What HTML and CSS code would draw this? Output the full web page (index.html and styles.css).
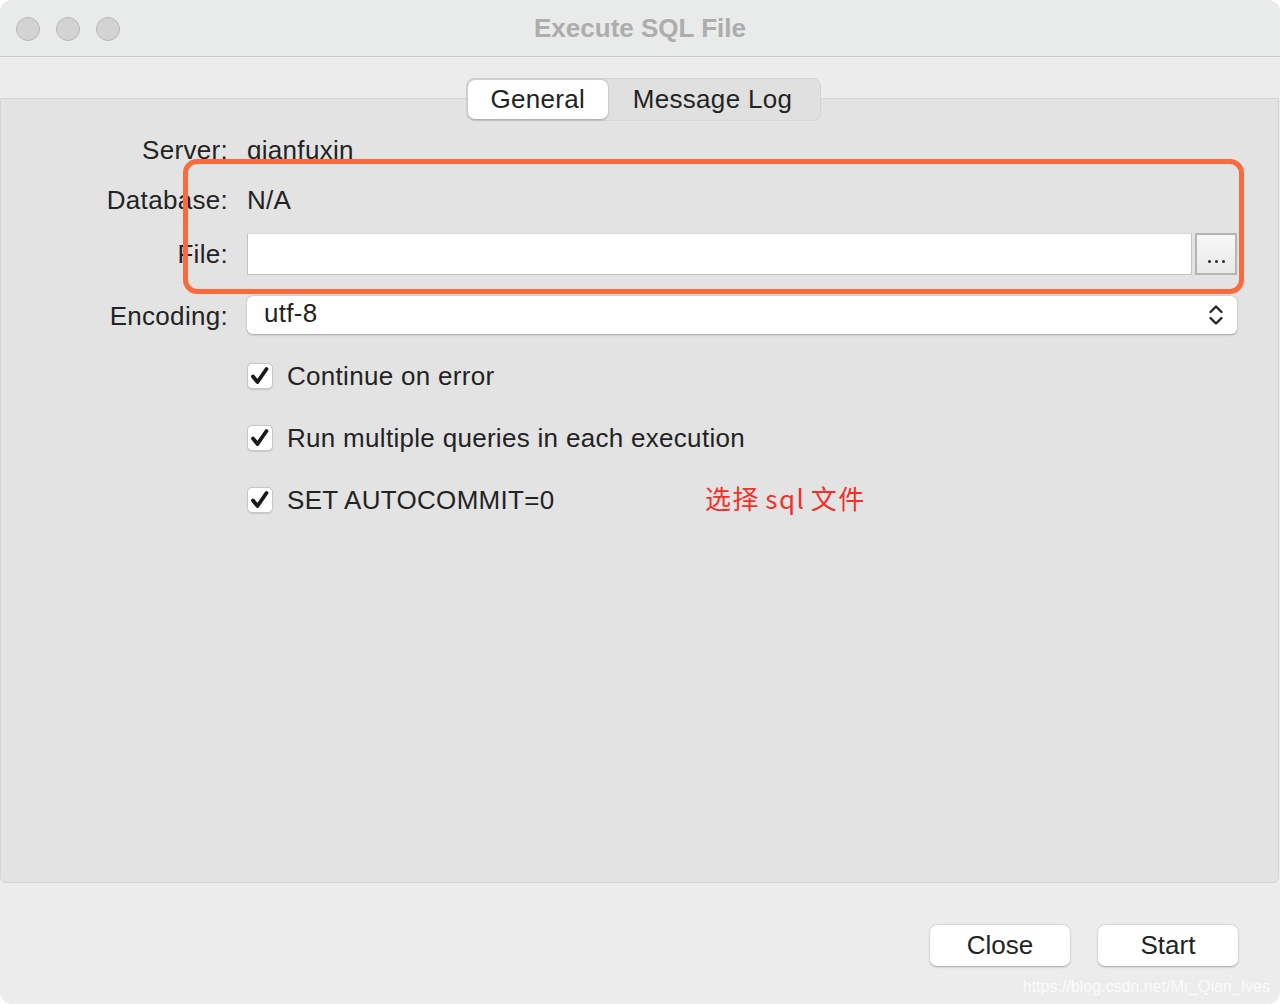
FILE: index.html
```html
<!DOCTYPE html>
<html>
<head>
<meta charset="utf-8">
<link rel="stylesheet" href="styles.css">
</head>
<body>
<div class="window">
  <div class="titlebar">
    <div class="lights">
      <span class="light"></span><span class="light"></span><span class="light"></span>
    </div>
    <div class="title">Execute SQL File</div>
    <div></div>
  </div>
  <div class="main">
    <div class="tabs">
      <div class="segmented">
        <div class="seg active">General</div>
        <div class="seg">Message Log</div>
      </div>
    </div>
    <div class="panel">
      <div class="row r-server"><div class="label">Server:</div><div class="value">qianfuxin</div></div>
      <div class="row r-db"><div class="label">Database:</div><div class="value">N/A</div></div>
      <div class="row r-file"><div class="label">File:</div>
        <div class="value file-wrap"><div class="file-input"></div><div class="browse"><i></i><i></i><i></i></div></div>
      </div>
      <div class="row r-enc"><div class="label">Encoding:</div>
        <div class="value select"><span>utf-8</span>
          <svg width="16" height="26" viewBox="0 0 16 26"><path d="M2.5 10 L8 4.5 L13.5 10" fill="none" stroke="#262626" stroke-width="2.4" stroke-linecap="round" stroke-linejoin="round"/><path d="M2.5 16 L8 21.5 L13.5 16" fill="none" stroke="#262626" stroke-width="2.4" stroke-linecap="round" stroke-linejoin="round"/></svg>
        </div>
      </div>
      <div class="row check first"><div class="label"></div><div class="value cb-line"><span class="cb"><svg width="26" height="26" viewBox="0 0 26 26"><path d="M6 13.5 L10.5 19 L19.5 6" fill="none" stroke="#1a1a1a" stroke-width="3.8" stroke-linecap="round" stroke-linejoin="round"/></svg></span><span>Continue on error</span></div></div>
      <div class="row check"><div class="label"></div><div class="value cb-line"><span class="cb"><svg width="26" height="26" viewBox="0 0 26 26"><path d="M6 13.5 L10.5 19 L19.5 6" fill="none" stroke="#1a1a1a" stroke-width="3.8" stroke-linecap="round" stroke-linejoin="round"/></svg></span><span>Run multiple queries in each execution</span></div></div>
      <div class="row check"><div class="label"></div><div class="value cb-line"><span class="cb"><svg width="26" height="26" viewBox="0 0 26 26"><path d="M6 13.5 L10.5 19 L19.5 6" fill="none" stroke="#1a1a1a" stroke-width="3.8" stroke-linecap="round" stroke-linejoin="round"/></svg></span><span class="cb-text">SET AUTOCOMMIT=0</span><span class="note">选择 sql 文件</span></div></div>
    </div>
    <div class="footer">
      <div class="btn">Close</div>
      <div class="btn">Start</div>
    </div>
  </div>
  <div class="highlight"></div>
  <div class="watermark">https://blog.csdn.net/Mr_Qian_Ives</div>
</div>
</body>
</html>
```
FILE: styles.css
```css
html, body {
  margin: 0;
  padding: 0;
  background: #ffffff;
}
.window {
  position: relative;
  width: 1280px;
  height: 1004px;
  background: #ececec;
  border-radius: 12px;
  overflow: hidden;
  font-family: "Liberation Sans", Arial, sans-serif;
  color: #232323;
  font-size: 26px;
}
.titlebar {
  height: 56px;
  background: #e9eaea;
  border-bottom: 1px solid #c9c9c9;
  display: grid;
  grid-template-columns: 1fr auto 1fr;
  align-items: center;
}
.lights {
  display: flex;
  gap: 16px;
  padding-left: 16px;
  padding-top: 2px;
}
.light {
  width: 22px;
  height: 22px;
  border-radius: 50%;
  background: #d3d3d3;
  border: 1px solid #b8b8b8;
}
.title {
  font-weight: bold;
  color: #adadad;
  font-size: 26px;
}
.main {
  padding-top: 21px;
}
.tabs {
  display: flex;
  justify-content: center;
  position: relative;
  z-index: 2;
  padding-left: 7px;
}
.segmented {
  display: flex;
  background: #e0e0e0;
  border: 1px solid #d3d3d3;
  border-radius: 8px;
  padding: 1px;
  height: 39px;
  box-sizing: content-box;
  letter-spacing: 0.3px;
}
.seg {
  display: flex;
  align-items: center;
  justify-content: center;
  height: 39px;
  padding: 0 27px 0 25px;
  border-radius: 7px;
}
.seg.active {
  background: #ffffff;
  width: 140px;
  padding: 0;
  box-shadow: 0 0.5px 2px rgba(0,0,0,0.3);
}
.panel {
  position: relative;
  margin: -23px 1px 0 0;
  height: 785px;
  box-sizing: border-box;
  background: #e3e3e3;
  border: 1px solid #d5d5d5;
  border-radius: 0 0 6px 6px;
  padding: 31px 41px 0 0;
  letter-spacing: 0.3px;
}
.row {
  display: flex;
  align-items: center;
  gap: 19px;
}
.label {
  width: 227px;
  flex: none;
  text-align: right;
}
.value {
  flex: 1;
}
.r-server { height: 40px; }
.r-db { height: 40px; margin-top: 10px; }
.r-file { height: 42px; margin-top: 13px; }
.r-enc { height: 38px; margin-top: 21px; }
.r-enc .label { padding-top: 2px; }
.file-wrap {
  display: flex;
  gap: 3px;
  height: 42px;
}
.file-input {
  flex: 1;
  background: #ffffff;
  border: 1px solid #c3c3c3;
  border-top-color: #d4d4d4;
}
.browse {
  width: 42px;
  flex: none;
  background: linear-gradient(#f7f7f7, #e9e9e9);
  border: 2px solid #b5b5b5;
  display: flex;
  align-items: flex-end;
  justify-content: center;
  gap: 4px;
  padding-bottom: 10px;
  box-sizing: border-box;
}
.browse i {
  width: 3px;
  height: 3px;
  border-radius: 50%;
  background: #2a2a2a;
}
.select {
  height: 38px;
  background: #ffffff;
  border-radius: 6px;
  box-shadow: 0 0.5px 2px rgba(0,0,0,0.3);
  display: flex;
  align-items: center;
  justify-content: space-between;
  padding: 0 13px 0 17px;
}
.select span {
  margin-top: -4px;
}
.check {
  height: 36px;
  margin-top: 26px;
}
.check.first {
  margin-top: 24px;
}
.cb-line {
  display: flex;
  align-items: center;
  gap: 14px;
}
.cb {
  width: 26px;
  height: 26px;
  box-sizing: border-box;
  background: #ffffff;
  border: 1px solid #c8c8c8;
  border-radius: 5px;
  box-shadow: 0 0.5px 1px rgba(0,0,0,0.12);
  display: flex;
  align-items: center;
  justify-content: center;
}
.cb svg {
  flex: none;
}
.cb-text {
  width: 404px;
}
.note {
  color: #f2302a;
  font-family: "Noto Sans CJK SC", "Liberation Sans", sans-serif;
  font-size: 26px;
  line-height: 1;
  letter-spacing: 1.5px;
  word-spacing: -2px;
  margin-top: -4px;
}
.footer {
  display: flex;
  justify-content: flex-end;
  gap: 28px;
  padding: 42px 42px 0 0;
}
.btn {
  width: 140px;
  height: 41px;
  background: #ffffff;
  border-radius: 7px;
  box-shadow: 0 0.5px 2px rgba(0,0,0,0.3);
  display: flex;
  align-items: center;
  justify-content: center;
}
.highlight {
  position: absolute;
  left: 183px;
  top: 159px;
  width: 1061px;
  height: 135px;
  box-sizing: border-box;
  border: 5px solid #fa6a3c;
  border-radius: 14px;
  z-index: 5;
}
.watermark {
  position: absolute;
  right: 10px;
  bottom: 8px;
  font-size: 16px;
  color: rgba(255,255,255,0.8);
  letter-spacing: 0;
}
```
